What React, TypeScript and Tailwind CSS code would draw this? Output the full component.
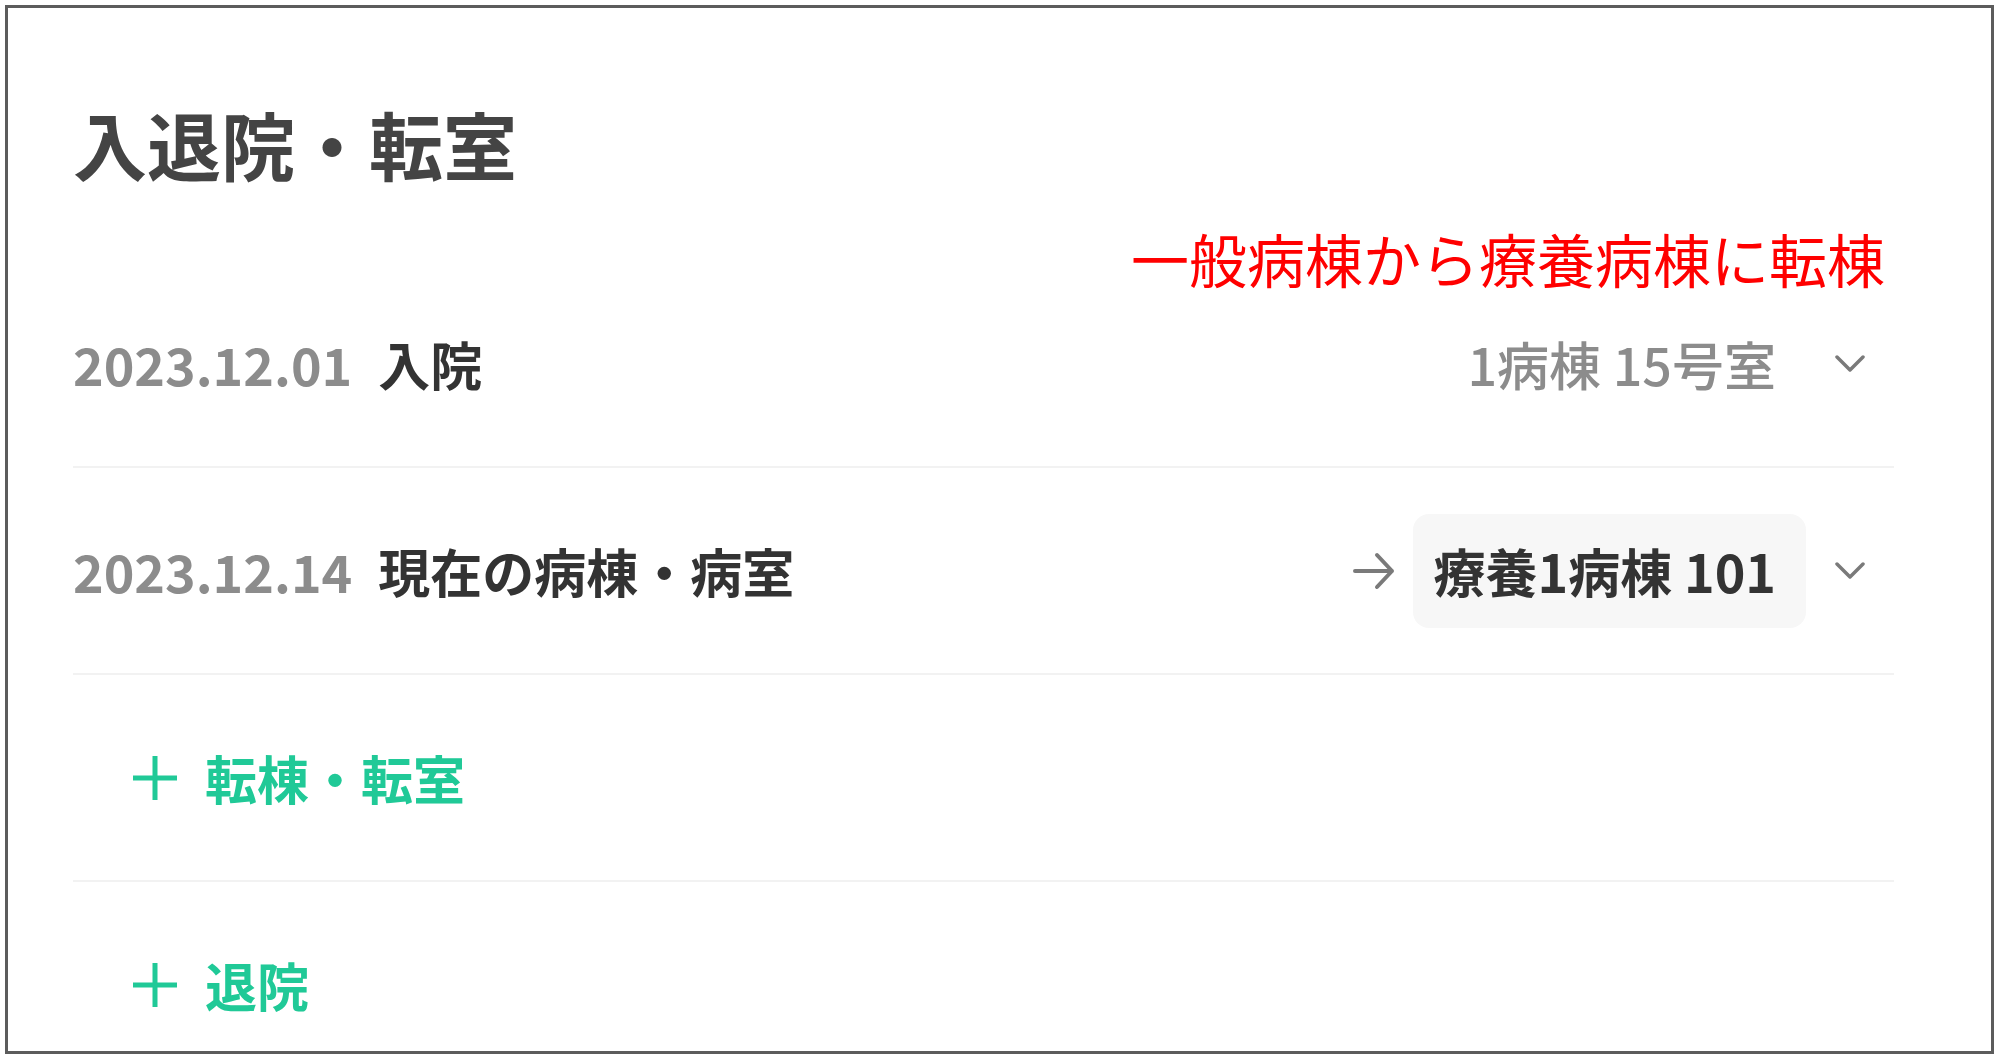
import { ReactNode } from "react";

const font = "font-['Noto_Sans_CJK_JP','Noto_Sans',sans-serif]";

function Chevron() {
  return (
    <svg width="30" height="17" viewBox="0 0 30 17" className="ml-[29px] shrink-0">
      <path d="M2 2 L15 15 L28 2" fill="none" stroke="#7a7a7a" strokeWidth="3.5" strokeLinecap="round" strokeLinejoin="round" />
    </svg>
  );
}

function ArrowRight() {
  return (
    <svg width="42" height="40" viewBox="0 0 42 40" className="shrink-0">
      <path d="M2 20 H39 M24 4 L39 20 L24 36" fill="none" stroke="#7a7a7a" strokeWidth="4" strokeLinecap="round" strokeLinejoin="round" />
    </svg>
  );
}

function Plus() {
  return (
    <svg width="44" height="44" viewBox="0 0 44 44" className="shrink-0">
      <path d="M22 0 V44 M0 22 H44" fill="none" stroke="#20c997" strokeWidth="5" />
    </svg>
  );
}

function Row({ children }: { children: ReactNode }) {
  return (
    <div className="flex h-[207px] shrink-0 items-center border-b-2 border-[#f2f2f2]">{children}</div>
  );
}

function HistoryRow({
  date,
  label,
  room,
  current = false,
}: {
  date: string;
  label: string;
  room: string;
  current?: boolean;
}) {
  return (
    <Row>
      <span className="text-[52px] leading-none font-semibold text-[#8c8c8c]">{date}</span>
      <span className="ml-[26px] text-[52px] leading-none font-bold text-[#333]">{label}</span>
      <div className="ml-auto flex items-center pr-[29px]">
        {current && <ArrowRight />}
        <div
          className={
            current
              ? "ml-[18px] flex h-[114px] items-center rounded-[16px] bg-[#f7f7f7] pl-[20px] pr-[30px] text-[52px] leading-none font-bold text-[#333]"
              : "flex h-[114px] items-center pl-[20px] pr-[30px] text-[52px] leading-none font-medium text-[#8c8c8c]"
          }
        >
          {room}
        </div>
        <Chevron />
      </div>
    </Row>
  );
}

function AddRow({ label }: { label: string }) {
  return (
    <Row>
      <div className="flex items-center pl-[60px]">
        <Plus />
        <span className="ml-[28px] text-[52px] leading-none font-bold text-[#20c997]">{label}</span>
      </div>
    </Row>
  );
}

export default function App() {
  return (
    <div className={`min-h-screen bg-white p-[5px] ${font}`}>
      <div className="relative flex h-[1049px] w-[1989px] flex-col overflow-hidden border-[3px] border-[#5c5c5c] bg-white pl-[65px] pr-[97px] pt-[98px]">
        <h1 className="text-[74px] leading-none font-bold text-[#444]">入退院・転室</h1>

        {/* annotation laid over the card */}
        <p className="absolute right-[106px] top-[221px] text-[58px] leading-none text-[#ff0000]">
          一般病棟から療養病棟に転棟
        </p>

        <div className="mt-[81px] flex flex-col">
          <HistoryRow date="2023.12.01" label="入院" room="1病棟 15号室" />
          <HistoryRow date="2023.12.14" label="現在の病棟・病室" room="療養1病棟 101" current />
          <AddRow label="転棟・転室" />
          <AddRow label="退院" />
        </div>
      </div>
    </div>
  );
}
